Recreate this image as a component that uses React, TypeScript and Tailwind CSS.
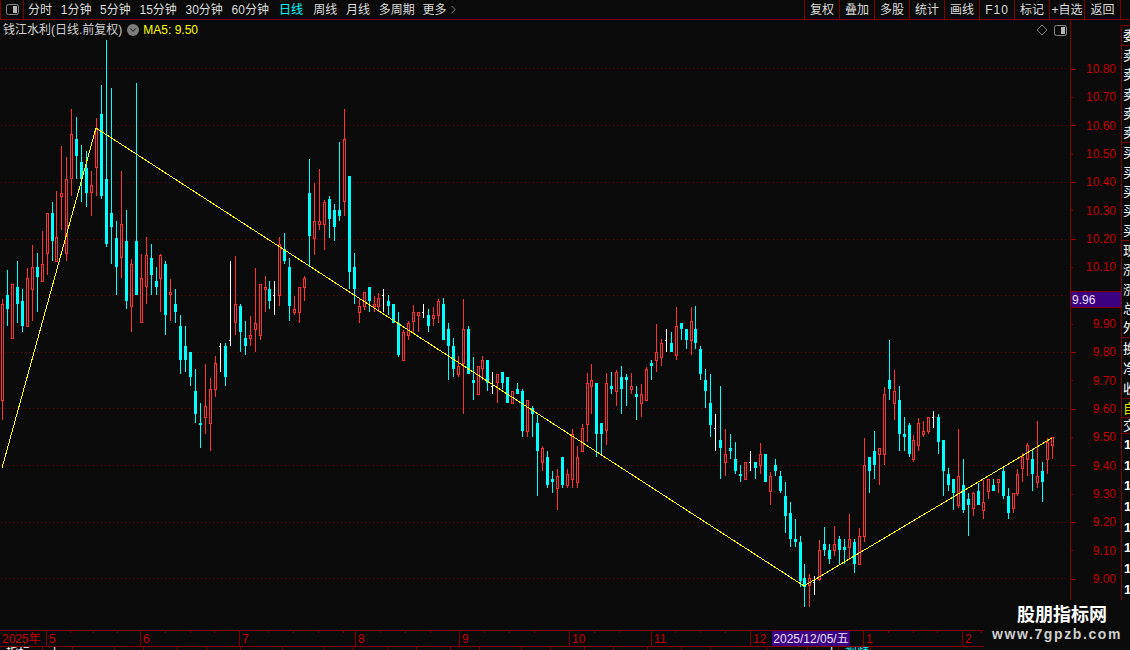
import { ChevronDown, ChevronRight } from 'lucide-react';

// [x, color (0 red, 1 cyan, 2 white), wickTop, bodyTop, bodyBottom, wickBottom]
const CANDLES: number[][] = [
  [2,0,299,304,401,420],[7,1,270,295,309,326],[12,0,284,284,339,339],[17,1,261,287,304,323],[22,1,289,301,326,332],
  [27,0,268,278,327,327],[32,0,245,267,290,321],[37,1,253,267,277,312],[42,0,231,264,282,282],[47,0,213,213,254,275],
  [52,1,202,213,241,261],[56,0,191,237,262,262],[61,0,146,193,197,230],[66,0,157,179,254,261],[71,0,109,134,179,196],
  [76,1,117,139,156,179],[81,1,145,162,179,202],[86,1,151,168,193,207],[91,0,171,185,193,216],[96,0,118,129,168,196],
  [101,1,85,114,196,199],[106,1,40,179,244,247],[111,1,88,213,227,264],[116,1,221,238,267,295],[121,0,171,224,258,278],
  [126,1,210,241,301,309],[131,0,259,264,307,332],[136,1,83,241,295,295],[141,0,254,278,323,323],[146,0,237,255,287,304],
  [151,1,244,258,275,295],[156,1,267,281,287,295],[160,0,254,255,279,312],[165,1,261,264,315,335],[170,0,279,292,295,321],
  [175,1,289,304,312,323],[180,1,315,326,360,374],[185,1,326,346,360,372],[190,1,352,352,377,386],[195,1,369,391,414,423],
  [200,1,403,423,425,448],[205,0,364,406,418,434],[210,0,378,389,424,451],[215,0,356,363,390,397],[220,2,343,346,346,372],
  [225,1,343,346,377,386],[230,2,261,340,340,346],[235,0,256,304,323,335],[240,1,304,306,332,352],[245,1,321,338,346,355],
  [250,0,316,335,339,346],[255,0,268,323,330,352],[260,0,284,284,336,340],[265,0,276,287,290,312],[269,1,281,289,301,309],
  [274,2,281,295,295,315],[279,0,237,244,296,306],[284,1,233,249,261,264],[289,1,258,267,306,321],[294,0,296,309,313,315],
  [299,0,287,287,313,323],[304,0,276,278,288,301],[309,1,159,193,236,266],[314,0,183,221,239,255],[319,0,169,221,225,230],
  [324,0,200,202,225,250],[329,1,196,199,219,238],[334,1,204,210,227,241],[339,1,142,210,216,221],[344,0,109,139,202,216],
  [349,1,176,176,272,289],[354,1,253,267,289,304],[359,0,299,306,313,323],[364,0,292,292,307,310],[369,1,287,287,301,312],
  [374,0,296,304,307,312],[378,0,293,298,307,312],[383,2,289,295,295,312],[388,1,295,301,306,315],[393,1,304,304,323,323],
  [398,1,312,323,355,357],[403,0,330,332,361,361],[408,0,321,323,336,340],[413,0,305,312,322,333],[418,0,312,312,316,332],
  [423,2,304,312,312,318],[428,1,309,315,326,332],[433,0,307,315,319,326],[438,0,299,301,316,323],[443,1,298,304,340,340],
  [448,1,323,329,346,380],[453,1,338,346,369,377],[458,0,356,366,375,377],[463,0,299,329,364,414],[468,1,326,329,374,374],
  [473,1,357,380,383,400],[478,0,366,366,395,395],[482,0,356,360,369,380],[487,1,360,360,383,391],[492,2,372,386,386,394],
  [497,0,374,374,383,403],[502,1,372,372,383,389],[507,1,377,377,403,403],[512,0,391,391,404,404],[517,1,383,389,394,394],
  [522,1,389,391,431,437],[527,0,400,400,432,437],[532,1,406,408,414,437],[537,1,415,423,451,496],[542,0,446,448,463,471],
  [547,1,451,457,485,488],[552,1,471,479,482,493],[557,0,469,476,489,510],[562,1,457,457,485,488],[567,0,469,474,486,488],
  [572,0,429,434,480,488],[577,0,446,457,483,488],[582,0,424,428,452,452],[587,0,373,383,425,442],[591,0,364,380,387,414],
  [596,1,383,383,434,457],[601,1,423,423,434,455],[606,0,373,383,431,445],[611,1,372,386,389,394],[616,0,370,372,392,406],
  [621,1,366,377,389,414],[626,1,374,377,380,406],[631,0,373,386,390,394],[636,1,386,394,397,420],[641,0,384,394,404,417],
  [646,0,367,369,401,401],[651,1,360,363,366,380],[656,0,324,352,361,372],[661,0,339,343,358,366],[666,2,329,340,340,352],
  [671,1,332,343,352,352],[676,0,307,326,356,360],[681,1,323,323,329,340],[686,1,329,329,340,349],[691,0,307,321,341,355],
  [695,1,306,329,343,349],[700,1,346,349,374,380],[705,1,369,380,391,408],[710,1,374,403,425,437],[715,2,414,428,428,451],
  [720,1,386,440,448,479],[725,0,429,454,463,476],[730,1,434,448,451,459],[735,1,442,459,471,474],[740,1,465,474,476,482],
  [745,0,462,462,480,480],[750,2,451,462,462,471],[755,1,462,462,468,479],[760,0,443,454,466,474],[765,1,454,454,482,482],
  [770,0,472,476,492,505],[775,1,459,465,471,476],[780,1,471,476,491,493],[785,1,482,496,516,533],[790,1,502,513,539,547],
  [795,1,519,539,542,547],[800,1,536,542,581,587],[804,1,564,578,587,607],[809,0,574,578,586,607],[814,2,576,582,582,595],
  [819,0,540,550,580,581],[824,1,527,544,550,556],[829,1,544,550,559,564],[834,0,526,544,551,556],[839,1,536,539,550,564],
  [844,1,539,547,550,564],[849,0,514,539,548,560],[854,1,539,542,564,573],[859,0,528,536,565,565],[864,0,438,465,537,542],
  [869,1,457,457,471,493],[874,1,431,451,465,479],[879,0,448,448,455,485],[884,0,387,394,455,465],[889,1,340,380,389,400],
  [894,0,370,391,404,420],[899,1,386,400,434,451],[904,1,417,434,437,451],[909,1,423,425,454,457],[913,0,435,440,460,462],
  [918,0,418,423,446,451],[923,0,421,431,435,437],[928,0,417,417,432,434],[933,2,411,417,417,428],[938,1,414,417,442,454],
  [943,1,440,440,471,496],[948,1,468,474,485,491],[953,1,479,479,493,510],[958,0,429,476,506,508],[963,1,459,485,510,513],
  [968,1,493,499,505,536],[973,0,492,493,509,516],[978,1,483,491,505,505],[983,0,480,502,511,519],[988,0,479,479,492,499],
  [993,1,479,485,491,491],[998,0,479,479,483,493],[1003,1,468,471,496,499],[1008,1,488,496,513,519],[1013,0,493,493,509,513],
  [1017,0,469,474,494,496],[1022,0,453,457,469,482],[1027,0,443,445,460,476],[1032,1,449,459,474,491],[1037,0,421,476,483,488],
  [1042,1,462,471,482,502],[1047,0,438,442,460,474],[1052,0,437,437,446,459],
];

const COLORS = ['#ff3232', '#00ffff', '#ffffff'];
const GRID_Y = [68, 125, 182, 239, 295, 352, 408, 465, 522, 578];
// the 10.00 row sits under the purple 9.96 tag
const PRICES = ['10.80','10.70','10.60','10.50','10.40','10.30','10.20','10.10','','9.90','9.80','9.70','9.60','9.50','9.40','9.30','9.20','9.10','9.00'];
const TABS = ['分时', '1分钟', '5分钟', '15分钟', '30分钟', '60分钟'];
const TOOLS = ['复权', '叠加', '多股', '统计', '画线', 'F10', '标记', '+自选', '返回'];
const MONTHS = [
  { label: '2025年', width: 46 }, { label: '5', width: 94 }, { label: '6', width: 99 }, { label: '7', width: 116 },
  { label: '8', width: 104 }, { label: '9', width: 110 }, { label: '10', width: 82 }, { label: '11', width: 99 },
  { label: '12', width: 113 }, { label: '1', width: 99 }, { label: '2', width: 159 },
];
const TIME_TICKS = [70,93,117,165,190,214,268,293,318,343,380,405,430,484,509,534,594,619,675,700,725,775,800,825,888,913,937,981,1006,1031,1056];
const STATUS: { w: number; t?: string; cyan?: boolean }[] = [
  { w: 43, t: '指标' }, { w: 30, t: '上' }, { w: 42 }, { w: 29 }, { w: 34 }, { w: 29 }, { w: 34 }, { w: 42 }, { w: 42 }, { w: 29 },
  { w: 34 }, { w: 29 }, { w: 34 }, { w: 29 }, { w: 42 }, { w: 29 }, { w: 34 }, { w: 29 }, { w: 34 }, { w: 34 }, { w: 29 }, { w: 56 }, { w: 41 },
  { w: 31, t: '　上' }, { w: 32, t: '视频', cyan: true }, { w: 120 },
];

function PanelIcon() {
  return (
    <svg width="13" height="11" viewBox="0 0 13 11">
      <rect x="0.5" y="0.5" width="12" height="10" rx="2" fill="none" stroke="#8a8a8a" />
      <rect x="7" y="2" width="4" height="7" fill="#b5b5b5" />
    </svg>
  );
}

function Chart() {
  return (
    <svg width="1070" height="590" viewBox="0 40 1070 590" shapeRendering="crispEdges" className="block">
      {GRID_Y.map((y) => (
        <line key={y} x1="1" x2="1068" y1={y + 0.5} y2={y + 0.5} stroke="#6e0000" strokeDasharray="1 3" />
      ))}
      {CANDLES.map(([x, c, wt, bt, bb, wb]) => {
        const color = COLORS[c];
        return (
          <g key={x}>
            <rect x={x} y={wt} width="1" height={wb - wt} fill={color} />
            {c === 0 && <rect x={x - 0.5} y={bt + 0.5} width="2" height={Math.max(bb - bt - 1, 1)} fill="#0a0a0a" stroke={color} />}
            {c === 1 && <rect x={x - 1} y={bt} width="3" height={Math.max(bb - bt, 2)} fill={color} />}
            {c === 2 && <rect x={x - 1} y={bt} width="1" height="1" fill={color} />}
          </g>
        );
      })}
      <polyline
        points="2,468 96,128 804,586 1052,438"
        fill="none"
        stroke="#ffff00"
        strokeWidth="1"
      />
    </svg>
  );
}

function SideRow({ text, color = 'text-white' }: { text: string; color?: string }) {
  return <div className={`flex-1 pl-[1px] flex items-center whitespace-nowrap overflow-hidden text-[13px] leading-none ${color}`}>{text}</div>;
}

export default function App() {
  return (
    <div className="relative w-[1130px] h-[650px] overflow-hidden flex flex-col bg-[#0a0a0a] text-[12px] text-[#dcdcdc] font-['Liberation_Sans','Noto_Sans_CJK_SC',sans-serif]">
      {/* top toolbar */}
      <div className="h-[20px] shrink-0 flex items-stretch border-b border-[#800000]">
        <div className="w-[24px] flex items-center justify-center border-l border-r border-[#800000]">
          <PanelIcon />
        </div>
        <div className="flex items-center pl-[4px] gap-[8.7px] leading-none">
          {TABS.map((t) => <span key={t}>{t}</span>)}
          <span className="ml-[1.5px] text-[#00ffff]">日线</span>
          <span className="ml-[1.5px]">周线</span>
          <span>月线</span>
          <span>多周期</span>
          <span className="flex items-center ml-[-1px]">更多<ChevronRight size={13} strokeWidth={1} className="ml-[1px]" /></span>
        </div>
        <div className="ml-auto flex mr-[9px]">
          {TOOLS.map((t) => (
            <div key={t} className={`flex items-center justify-center border-l border-[#800000] leading-none whitespace-nowrap ${t === '返回' ? 'w-[37px] border-r' : 'w-[35px]'} ${t === 'F10' ? 'tracking-[1px]' : ''}`}>
              {t}
            </div>
          ))}
        </div>
      </div>

      <div className="h-[610px] shrink-0 flex">
        {/* chart panel */}
        <div className="w-[1070px] shrink-0 flex flex-col">
          <div className="h-[20px] shrink-0 flex items-center pl-[3px] pr-[3px] leading-none whitespace-nowrap">
            <span className="text-[#d0d0d0]">钱江水利(日线.前复权)</span>
            <span className="ml-[5px] w-[12px] h-[12px] rounded-full bg-[#7c7c7c] flex items-center justify-center">
              <ChevronDown size={10} strokeWidth={2.5} color="#2a2a2a" />
            </span>
            <span className="ml-[4px] text-[#ffff00]">MA5: 9.50</span>
            <svg width="12" height="12" viewBox="0 0 12 12" className="ml-auto mr-[6px]">
              <path d="M6 1 L11 6 L6 11 L1 6 Z" fill="none" stroke="#777" />
            </svg>
            <PanelIcon />
          </div>
          <Chart />
        </div>

        {/* price axis */}
        <div className="relative w-[51px] shrink-0 border-l border-[#800000] pt-[35px] text-[#c40000]">
          {PRICES.map((p, i) => (
            <div key={i} className="h-[28.33px] flex items-center justify-between pr-[5px] leading-none">
              <span className={`h-px bg-[#900000] ${i % 2 === 0 ? 'w-[5px]' : 'w-[2px]'}`} />
              <span>{p}</span>
            </div>
          ))}
          <div className="absolute left-0 right-0 top-[271px] h-[17px] flex items-center pl-[1px] bg-[#3c0082] border-y border-[#800000] text-[#e8e0ff] leading-none">9.96</div>
        </div>

        {/* side column, cut off by the window edge */}
        <div className="w-[9px] shrink-0 mt-[5px] flex flex-col border-l border-t border-[#800000] overflow-hidden">
          <div className="h-[20px] shrink-0 flex flex-col border-b border-[#800000]"><SideRow text="委比" /></div>
          <div className="h-[97px] shrink-0 flex flex-col border-b border-[#800000]">
            {['卖五', '卖四', '卖三', '卖二', '卖一'].map((t) => <SideRow key={t} text={t} />)}
          </div>
          <div className="h-[98px] shrink-0 flex flex-col border-b border-[#800000]">
            {['买一', '买二', '买三', '买四', '买五'].map((t) => <SideRow key={t} text={t} />)}
          </div>
          <div className="h-[97px] shrink-0 flex flex-col border-b border-[#800000]">
            {['现价', '涨跌', '涨幅', '总手', '外盘'].map((t) => <SideRow key={t} text={t} />)}
          </div>
          <div className="h-[61px] shrink-0 flex flex-col border-b border-[#800000]">
            {['换手', '净资', '收益'].map((t) => <SideRow key={t} text={t} />)}
          </div>
          <div className="h-[19px] shrink-0 flex flex-col border-b border-[#800000]"><SideRow text="自选" color="text-[#e0e000]" /></div>
          <div className="h-[16px] shrink-0 flex flex-col border-b border-[#800000]"><SideRow text="交易" /></div>
          {['1', '1', '1', '1', '1', '1', '1', '1'].map((t, i) => (
            <div key={i} className="h-[20.7px] shrink-0 pl-[2px] flex items-center text-[13px] leading-none text-white font-bold">{t}</div>
          ))}
        </div>
      </div>

      {/* time axis */}
      <div className="relative h-[17px] shrink-0 flex border-y border-[#800000] text-[#c40000] leading-none">
        {MONTHS.map((m, i) => (
          <div key={m.label} style={{ width: m.width }} className={`flex items-center shrink-0 pl-[2px] ${i > 0 ? 'border-l border-[#800000]' : ''}`}>{m.label}</div>
        ))}
        <svg width="1130" height="3" className="absolute left-0 top-0" shapeRendering="crispEdges">
          {TIME_TICKS.map((x) => <rect key={x} x={x} y="0" width="1" height="2" fill="#800000" />)}
        </svg>
        <div className="absolute left-[772px] top-0 w-[78px] h-[15px] flex items-center justify-center bg-[#3c0082] text-[#e8e0ff] whitespace-nowrap">2025/12/05/五</div>
      </div>

      {/* status bar, mostly cut off */}
      <div className="h-[3px] shrink-0 flex overflow-hidden leading-[12px] text-white">
        {STATUS.map((s, i) => (
          <div key={i} style={{ width: s.w }} className={`shrink-0 pl-[6px] whitespace-nowrap border-r border-[#800000] ${s.cyan ? 'text-[#00ffff]' : ''}`}>{s.t ?? ''}</div>
        ))}
      </div>

      {/* site watermark */}
      <div className="absolute right-0 bottom-0 w-[146px] h-[50px] bg-[#0a0a0a] flex flex-col items-center justify-center pb-[5px] leading-none">
        <div className="pl-[10px] text-[18px] font-bold text-white font-['Noto_Sans_CJK_SC',sans-serif]">股朋指标网</div>
        <div className="mt-[5px] text-[14px] font-bold tracking-[1.6px] text-[#cfcfcf] whitespace-nowrap">www.7gpzb.com</div>
      </div>
    </div>
  );
}
